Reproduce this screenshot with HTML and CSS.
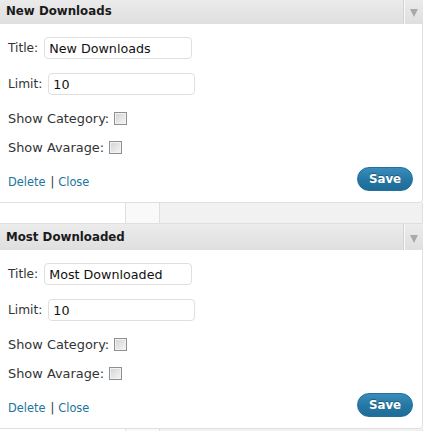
FILE: index.html
```html
<!DOCTYPE html>
<html>
<head>
<meta charset="utf-8">
<link rel="stylesheet" href="styles.css">
</head>
<body>
<div class="stack">
  <div class="widget">
    <div class="widget-top">
      <div class="widget-title">New Downloads</div>
      <div class="widget-action"><span class="arrow"></span></div>
    </div>
    <div class="widget-inside">
      <div class="row row-text"><label class="lbl">Title:</label><input class="field" type="text" value="New Downloads"></div>
      <div class="row row-text row-gap"><label class="lbl">Limit:</label><input class="field field-limit" type="text" value="10"></div>
      <div class="row row-check"><label class="lbl lbl-check">Show Category:</label><input class="check" type="checkbox"></div>
      <div class="row row-check row-check2"><label class="lbl lbl-check">Show Avarage:</label><input class="check" type="checkbox"></div>
      <div class="actions">
        <div class="links"><a class="link" href="#">Delete</a><span class="sep">|</span><a class="link" href="#">Close</a></div>
        <button class="save" type="button">Save</button>
      </div>
    </div>
  </div>
  <div class="strip"><div class="seg seg-a"></div><div class="seg seg-b"></div><div class="seg seg-c"></div></div>
  <div class="widget">
    <div class="widget-top">
      <div class="widget-title">Most Downloaded</div>
      <div class="widget-action"><span class="arrow"></span></div>
    </div>
    <div class="widget-inside">
      <div class="row row-text"><label class="lbl">Title:</label><input class="field" type="text" value="Most Downloaded"></div>
      <div class="row row-text row-gap"><label class="lbl">Limit:</label><input class="field field-limit" type="text" value="10"></div>
      <div class="row row-check"><label class="lbl lbl-check">Show Category:</label><input class="check" type="checkbox"></div>
      <div class="row row-check row-check2"><label class="lbl lbl-check">Show Avarage:</label><input class="check" type="checkbox"></div>
      <div class="actions">
        <div class="links"><a class="link" href="#">Delete</a><span class="sep">|</span><a class="link" href="#">Close</a></div>
        <button class="save" type="button">Save</button>
      </div>
    </div>
  </div>
  <div class="strip"><div class="seg seg-a"></div><div class="seg seg-b"></div><div class="seg seg-c"></div></div>
</div>
</body>
</html>
```
FILE: styles.css
```css
html, body {
  margin: 0;
  padding: 0;
  background: #ffffff;
  overflow: hidden;
}
body {
  font-family: "DejaVu Sans", Verdana, sans-serif;
  color: #333333;
}
.stack {
  margin-top: -2px;
  width: 423px;
}
.widget-top {
  height: 26px;
  display: flex;
  background: linear-gradient(#ececec, #dfdfdf);
}
.widget-title {
  flex: 1;
  padding-left: 6px;
  font-weight: bold;
  font-size: 11.8px;
  line-height: 27px;
  color: #1a1a1a;
  white-space: nowrap;
}
.widget-action {
  width: 20px;
  border-left: 1px solid #d2d2d2;
  box-shadow: inset 1px 0 0 #fafafa;
  display: flex;
  justify-content: center;
  padding-top: 11px;
  box-sizing: border-box;
}
.arrow {
  width: 0;
  height: 0;
  margin-left: 1px;
  border-left: 4.5px solid transparent;
  border-right: 4.5px solid transparent;
  border-top: 8px solid #a9a9a9;
}
.widget-inside {
  border-right: 1px solid #dfdfdf;
  border-bottom: 1px solid #dfdfdf;
  border-bottom-right-radius: 4px;
  padding: 13px 9px 11px 8px;
  background: #ffffff;
}
.row {
  display: flex;
  align-items: center;
}
.row-text {
  height: 22px;
}
.row-gap {
  margin-top: 14px;
}
.row-check {
  height: 20px;
  margin-top: 13px;
}
.row-check2 {
  margin-top: 9px;
}
.lbl {
  font-size: 12.2px;
  color: #333333;
  white-space: nowrap;
}
.lbl-check {
  font-size: 12.9px;
}
.field {
  margin: 0 0 0 6px;
  width: 148px;
  height: 22px;
  box-sizing: border-box;
  border: 1px solid #dfdfdf;
  border-radius: 4px;
  padding: 0 4px;
  font-family: "DejaVu Sans", Verdana, sans-serif;
  font-size: 12.7px;
  color: #111111;
  background: #ffffff;
  outline: none;
}
.field-limit {
  width: 147px;
}
.check {
  -webkit-appearance: none;
  appearance: none;
  margin: 0 0 0 5px;
  width: 13px;
  height: 13px;
  box-sizing: border-box;
  border: 1px solid #8e8f8f;
  background: linear-gradient(135deg, #d2d2d2, #f6f6f6);
  box-shadow: inset 0 0 0 1px #f2f2f2;
}
.actions {
  margin-top: 10px;
  height: 24px;
  display: flex;
  justify-content: space-between;
  align-items: center;
}
.links {
  font-size: 11.4px;
  padding-top: 5px;
}
.link {
  color: #21759b;
  text-decoration: none;
}
.sep {
  color: #333333;
  margin: 0 4px 0 5px;
}
.save {
  width: 56px;
  height: 24px;
  border: 1px solid #21719a;
  border-radius: 12px;
  background: linear-gradient(#3a8cbc, #2476a3 55%, #1f6d98);
  color: #ffffff;
  font-family: "DejaVu Sans", Verdana, sans-serif;
  font-weight: bold;
  font-size: 11.8px;
  padding: 0;
  text-shadow: 0 -1px 0 rgba(0,0,0,0.3);
}
.strip {
  height: 20px;
  display: flex;
  border-bottom: 1px solid #dfdfdf;
}
.seg {
  height: 20px;
}
.seg-a {
  width: 125px;
  background: #ffffff;
  border-right: 1px solid #dfdfdf;
}
.seg-b {
  width: 33px;
  background: #f9f9f9;
  border-right: 1px solid #dfdfdf;
}
.seg-c {
  flex: 1;
  background: #f1f1f1;
  border-right: 1px solid #dfdfdf;
}
```
